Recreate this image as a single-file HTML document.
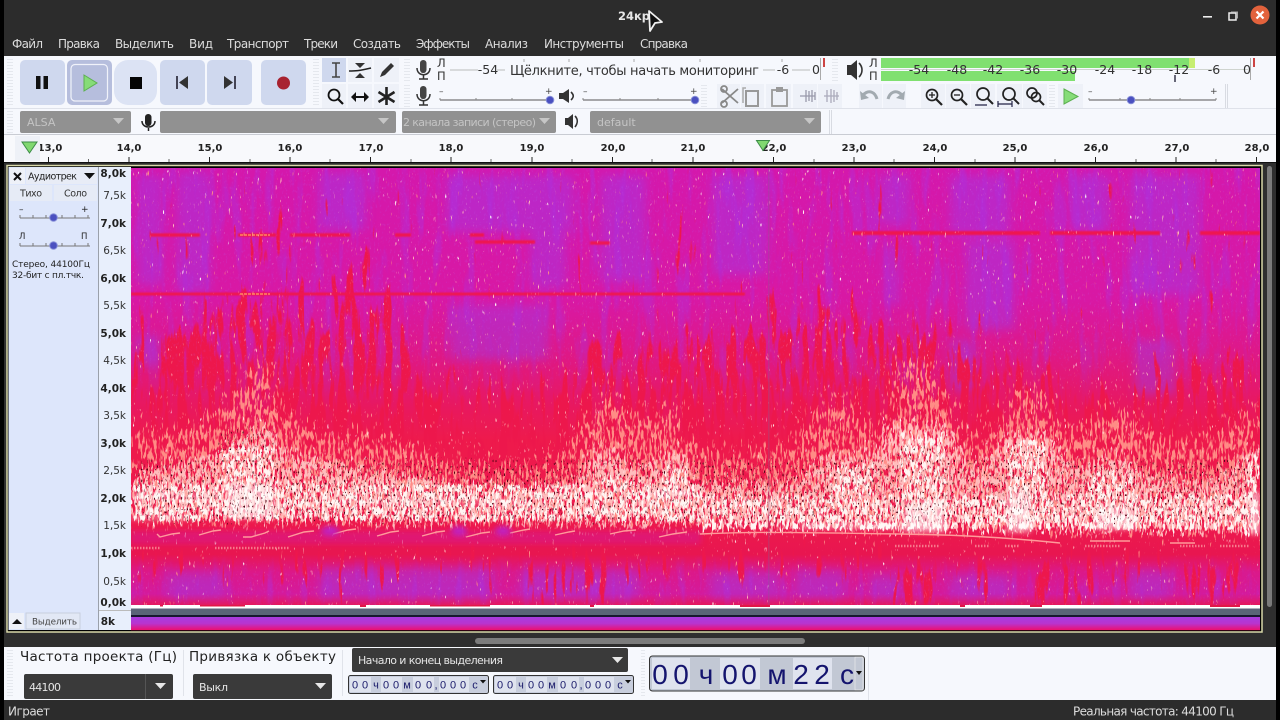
<!DOCTYPE html>
<html><head><meta charset="utf-8"><style>
html,body{margin:0;padding:0;background:#000;width:1280px;height:720px;overflow:hidden}
svg{display:block}
text{font-family:"DejaVu Sans","Liberation Sans",sans-serif}
.m{fill:#dcdcdc;font-size:12px}
.r{fill:#222;font-size:10px;font-weight:bold;text-anchor:middle}
.fb{fill:#222;font-size:10.5px;font-weight:bold;text-anchor:end}
.fn{fill:#333;font-size:10.5px;text-anchor:end}
.mt{fill:#333;font-size:12.5px;text-anchor:middle}
.dd{fill:#c4c4c4;font-size:11px}
.t{fill:#222;font-size:13.5px}
.w{fill:#e6e6e6;font-size:11px}
.tm{fill:#1a1a6a;font-size:11px;text-anchor:middle;font-family:"Liberation Sans",sans-serif}
.tb{fill:#14146e;font-size:28px;text-anchor:middle;font-family:"Liberation Sans",sans-serif}
</style></head><body>
<svg width="1280" height="720" viewBox="0 0 1280 720" xmlns="http://www.w3.org/2000/svg">
<defs>
<linearGradient id="base" x1="0" y1="168" x2="0" y2="607" gradientUnits="userSpaceOnUse">
<stop offset="0" stop-color="#d418ac"/><stop offset=".3" stop-color="#d818a4"/><stop offset=".42" stop-color="#de1888"/>
<stop offset=".54" stop-color="#e81860"/><stop offset=".62" stop-color="#ee1a4c"/><stop offset=".8" stop-color="#ee1a4c"/>
<stop offset=".88" stop-color="#e81650"/><stop offset=".92" stop-color="#dc1888"/><stop offset=".97" stop-color="#d41a9c"/><stop offset="1" stop-color="#e81850"/>
</linearGradient>
<linearGradient id="ch2" x1="0" y1="617" x2="0" y2="630" gradientUnits="userSpaceOnUse"><stop offset="0" stop-color="#a83ce0"/><stop offset=".5" stop-color="#b834d0"/><stop offset="1" stop-color="#ec1070"/></linearGradient>
<linearGradient id="fade" x1="0" y1="168" x2="0" y2="607" gradientUnits="userSpaceOnUse"><stop offset="0" stop-color="#fff"/><stop offset=".42" stop-color="#fff" stop-opacity=".8"/><stop offset=".55" stop-color="#fff" stop-opacity="0"/><stop offset=".88" stop-color="#fff" stop-opacity="0"/><stop offset=".95" stop-color="#fff"/><stop offset="1" stop-color="#fff" stop-opacity=".3"/></linearGradient>
<mask id="fm"><rect x="131" y="168" width="1129" height="439" fill="url(#fade)"/></mask>
<clipPath id="sp"><rect x="131" y="168" width="1129" height="438"/></clipPath>
<filter id="b8" x="0" y="0" width="1280" height="720" filterUnits="userSpaceOnUse"><feGaussianBlur stdDeviation="5"/></filter>
<filter id="b3" x="0" y="0" width="1280" height="720" filterUnits="userSpaceOnUse"><feGaussianBlur stdDeviation="3"/></filter>
<filter id="b1" x="0" y="0" width="1280" height="720" filterUnits="userSpaceOnUse"><feGaussianBlur stdDeviation=".7"/></filter>
<filter id="pur" x="131" y="168" width="1129" height="439" filterUnits="userSpaceOnUse" color-interpolation-filters="sRGB">
<feTurbulence type="fractalNoise" baseFrequency="0.09 0.012" numOctaves="3" seed="7"/>
<feColorMatrix type="matrix" values="0 0 0 0 .66  0 0 0 0 .2  0 0 0 0 .9  5 0 0 0 -2.6"/></filter>
<filter id="fine" x="131" y="168" width="1129" height="439" filterUnits="userSpaceOnUse" color-interpolation-filters="sRGB">
<feTurbulence type="fractalNoise" baseFrequency="0.5 0.3" numOctaves="2" seed="4"/>
<feColorMatrix type="matrix" values="0 0 0 0 .72  0 0 0 0 .4  0 0 0 0 .95  6 0 0 0 -3.5"/></filter>
<filter id="redn" x="131" y="168" width="1129" height="439" filterUnits="userSpaceOnUse" color-interpolation-filters="sRGB">
<feGaussianBlur in="SourceAlpha" stdDeviation="14" result="s"/>
<feTurbulence type="fractalNoise" baseFrequency="0.13 0.018" numOctaves="3" seed="21"/>
<feColorMatrix type="matrix" values="0 0 0 0 1  0 0 0 0 1  0 0 0 0 1  1 0 0 0 0" result="n"/>
<feComposite in="s" in2="n" operator="arithmetic" k1="0" k2="3" k3="10" k4="-7.5"/>
<feColorMatrix type="matrix" values="0 0 0 0 .93  0 0 0 0 .09  0 0 0 0 .3  0 0 0 1 0"/></filter>
<filter id="pale" x="131" y="168" width="1129" height="439" filterUnits="userSpaceOnUse" color-interpolation-filters="sRGB">
<feGaussianBlur in="SourceAlpha" stdDeviation="10" result="s"/>
<feTurbulence type="fractalNoise" baseFrequency="0.42 0.1" numOctaves="2" seed="3"/>
<feColorMatrix type="matrix" values="0 0 0 0 1  0 0 0 0 1  0 0 0 0 1  1 0 0 0 0" result="n"/>
<feComposite in="s" in2="n" operator="arithmetic" k1="0" k2="3" k3="10" k4="-7.7"/>
<feColorMatrix type="matrix" values="0 0 0 0 1  0 0 0 0 .55  0 0 0 0 .52  0 0 0 1 0"/></filter>
<filter id="pale2" x="131" y="168" width="1129" height="439" filterUnits="userSpaceOnUse" color-interpolation-filters="sRGB">
<feGaussianBlur in="SourceAlpha" stdDeviation="6" result="s"/>
<feTurbulence type="fractalNoise" baseFrequency="0.45 0.13" numOctaves="2" seed="9"/>
<feColorMatrix type="matrix" values="0 0 0 0 1  0 0 0 0 1  0 0 0 0 1  1 0 0 0 0" result="n"/>
<feComposite in="s" in2="n" operator="arithmetic" k1="0" k2="3" k3="10" k4="-7.4"/>
<feColorMatrix type="matrix" values="0 0 0 0 1  0 0 0 0 .74  0 0 0 0 .74  0 0 0 1 0"/></filter>
<filter id="whi" x="131" y="168" width="1129" height="439" filterUnits="userSpaceOnUse" color-interpolation-filters="sRGB">
<feGaussianBlur in="SourceAlpha" stdDeviation="3" result="s"/>
<feTurbulence type="fractalNoise" baseFrequency="0.4 0.13" numOctaves="2" seed="11"/>
<feColorMatrix type="matrix" values="0 0 0 0 1  0 0 0 0 1  0 0 0 0 1  1 0 0 0 0" result="n"/>
<feComposite in="s" in2="n" operator="arithmetic" k1="0" k2="3" k3="10" k4="-7.8"/>
<feColorMatrix type="matrix" values="0 0 0 0 1  0 0 0 0 .96  0 0 0 0 .95  0 0 0 1 0"/></filter>
<filter id="drk" x="131" y="168" width="1129" height="439" filterUnits="userSpaceOnUse" color-interpolation-filters="sRGB">
<feGaussianBlur in="SourceAlpha" stdDeviation="5" result="s"/>
<feTurbulence type="fractalNoise" baseFrequency="0.7 0.35" numOctaves="1" seed="17"/>
<feColorMatrix type="matrix" values="0 0 0 0 1  0 0 0 0 1  0 0 0 0 1  1 0 0 0 0" result="n"/>
<feComposite in="s" in2="n" operator="arithmetic" k1="0" k2="3" k3="12" k4="-10.7"/>
<feColorMatrix type="matrix" values="0 0 0 0 .32  0 0 0 0 .02  0 0 0 0 .08  0 0 0 1 0"/></filter>
</defs>

<!-- window -->
<rect width="1280" height="720" fill="#000"/>
<rect x="4" width="1272" height="720" fill="#2c2c2c"/>
<text x="618" y="20" fill="#e6e6e6" font-size="11.5" font-weight="bold">24кр</text>
<rect x="1203" y="16" width="9" height="1.6" fill="#eee"/>
<rect x="1229" y="13" width="7" height="7" fill="none" stroke="#eee" stroke-width="1.5"/><path d="M1231 12h6.500v6.500" fill="none" stroke="#aaa"/>
<circle cx="1260" cy="15" r="9.500" fill="#e2623c"/><path d="M1256.500 11.500l7 7m0-7l-7 7" stroke="#fff" stroke-width="2.200"/>
<path d="M649 11L662 22 655 23 650 31z" fill="#111" stroke="#f0f0f0" stroke-width="1.800" stroke-linejoin="round"/>
<text class="m" x="12" y="48" textLength="31">Файл</text>
<text class="m" x="58" y="48" textLength="42">Правка</text>
<text class="m" x="115" y="48" textLength="59">Выделить</text>
<text class="m" x="189" y="48" textLength="24">Вид</text>
<text class="m" x="227" y="48" textLength="62">Транспорт</text>
<text class="m" x="304" y="48" textLength="34">Треки</text>
<text class="m" x="353" y="48" textLength="48">Создать</text>
<text class="m" x="416" y="48" textLength="54">Эффекты</text>
<text class="m" x="485" y="48" textLength="43">Анализ</text>
<text class="m" x="544" y="48" textLength="80">Инструменты</text>
<text class="m" x="640" y="48" textLength="48">Справка</text>

<!-- toolbars -->
<rect x="4" y="56" width="1272" height="106" fill="#f6f8fd"/>
<path d="M4 108.500H1276" stroke="#dfe2ea"/><path d="M4 134.500H1276" stroke="#c9ccd3"/>
<g fill="none" stroke="#d4d7de" stroke-dasharray="1 2" stroke-width="1"><path d="M8 59v48M10 59v48M12 59v48M314 59v48M316 59v48M318 59v48M405 59v22M407 59v22M409 59v22M405 85v22M407 85v22M409 85v22M8 111v22M10 111v22M12 111v22M833 59v22M835 59v22M837 59v22M702 85v22M704 85v22M706 85v22M1050 85v22M1052 85v22M1054 85v22"/></g>
<g fill="#cfd8ee"><rect x="20" y="60" width="45" height="45" rx="5"/><rect x="160" y="60" width="45" height="45" rx="5"/><rect x="207" y="60" width="45" height="45" rx="5"/><rect x="261" y="60" width="45" height="45" rx="5"/></g>
<rect x="67" y="60" width="45" height="45" rx="5" fill="#b6bedd"/><rect x="71" y="64.500" width="36.500" height="36.500" rx="4" fill="none" stroke="#f0f2fa" stroke-width="1.200"/>
<rect x="114" y="60" width="43" height="45" rx="14" fill="#dce3f4"/>
<rect x="36" y="76" width="4.500" height="13" fill="#111"/><rect x="43.500" y="76" width="4.500" height="13" fill="#111"/>
<path d="M84 75l13 8-13 8z" fill="#86dc78" stroke="#5cb050"/>
<rect x="130" y="77" width="12" height="12" fill="#050505"/>
<rect x="176" y="76" width="2" height="13" fill="#445"/><path d="M188 76v13l-9-6.500z" fill="#333"/>
<path d="M224 76v13l9-6.500z" fill="#333"/><rect x="234" y="76" width="2" height="13" fill="#445"/>
<circle cx="283.500" cy="83" r="6.500" fill="#a82230"/>
<!-- tools -->
<rect x="322" y="58" width="24" height="24" fill="#cfd8ee"/>
<g fill="#eef1f8"><rect x="348" y="58" width="24" height="24"/><rect x="374" y="58" width="25" height="24"/><rect x="322" y="84" width="24" height="24"/><rect x="348" y="84" width="24" height="24"/><rect x="374" y="84" width="25" height="24"/></g>
<path d="M332 63h8M332 77h8M336 63v14" stroke="#444" stroke-width="1.600" fill="none"/>
<path d="M349 71c6 0 10 0 22-3" stroke="#222" stroke-width="1.600" fill="none"/><path d="M355 63h10l-5 5zM355 78h10l-5-5z" fill="#333"/>
<path d="M380 77l2-5 9-9 3 3-9 9z" fill="#333"/>
<circle cx="334" cy="95" r="5.500" fill="none" stroke="#111" stroke-width="1.800"/><path d="M338 99l5 5" stroke="#111" stroke-width="2.200"/>
<path d="M353 97h14" stroke="#111" stroke-width="2"/><path d="M356 92l-5 5 5 5zM364 92l5 5-5 5z" fill="#111"/>
<path d="M386.500 87v18M378.500 92l16 10M394.500 92l-16 10" stroke="#222" stroke-width="2.600"/>
<!-- mics -->
<rect x="420" y="60" width="6.500" height="13" rx="3.200" fill="#444"/><path d="M417 68c0 9 13 9 13 0M423.500 75v4M419 79h9" stroke="#333" stroke-width="1.500" fill="none"/>
<rect x="420" y="86" width="6.500" height="13" rx="3.200" fill="#444"/><path d="M417 94c0 9 13 9 13 0M423.500 101v4M419 105h9" stroke="#333" stroke-width="1.500" fill="none"/>
<rect x="145" y="114" width="6.500" height="12" rx="3.200" fill="#222"/><path d="M142 121c0 8 13 8 13 0M148.500 128v3" stroke="#222" stroke-width="1.500" fill="none"/>
<!-- rec meter -->
<text x="437" y="67" fill="#333" font-size="11.500">Л</text><text x="437" y="80" fill="#333" font-size="11.500">П</text>
<path d="M450 70H478M497 70H505M763 70H775M792 70H810" stroke="#bbb"/>
<path d="M524 59v3M569 59v3M634 59v3M700 59v3M782 59v3" stroke="#aaa"/>
<text class="mt" x="488" y="74">-54</text><text class="mt" x="783" y="74">-6</text><text class="mt" x="816" y="74">0</text>
<text x="510" y="75" fill="#333" font-size="13" textLength="249">Щёлкните, чтобы начать мониторинг</text>
<rect x="820" y="58" width="1" height="22" fill="#aaa"/><rect x="823" y="58" width="2" height="9" fill="#c44"/>
<!-- sliders -->
<g stroke="#555" fill="none"><path d="M440 100H552M583 100H696M1089 100H1216"/><path d="M440 98v2M476 98v2M512 98v2M583 98v2M620 98v2M658 98v2M1089 98v2M1120 98v2M1150 98v2M1180 98v2M1216 98v2" stroke="#888"/></g>
<g fill="#444" font-size="9"><text x="439" y="94">–</text><text x="545" y="94">+</text><text x="583" y="94">–</text><text x="690" y="94">+</text><text x="1088" y="94">–</text><text x="1210" y="94">+</text></g>
<g fill="#4a50c0" stroke="#8890d8"><circle cx="550" cy="100" r="3.800"/><circle cx="695" cy="100" r="3.800"/><circle cx="1131" cy="100" r="3.800"/></g>
<!-- speakers -->
<g fill="#333"><path d="M559 93h4l6-4v14l-6-4h-4z"/><path d="M847 65h4l6-5v20l-6-5h-4z"/><path d="M565 118h3l5-4v15l-5-4h-3z"/></g>
<path d="M571 92c3 3 3 5 0 8M859 63c4 4 4 10 0 14M575 116c3 3 3 7 0 11" stroke="#333" stroke-width="1.600" fill="none"/>
<!-- edit icons -->
<g fill="#eef1f8"><rect x="717" y="84" width="23" height="24"/><rect x="741" y="84" width="23" height="24"/><rect x="766" y="84" width="25" height="24"/><rect x="793" y="84" width="24" height="24"/><rect x="818" y="84" width="24" height="24"/><rect x="859" y="84" width="23" height="24"/><rect x="883" y="84" width="23" height="24"/><rect x="921" y="84" width="24" height="24"/><rect x="946" y="84" width="24" height="24"/><rect x="971" y="84" width="24" height="24"/><rect x="997" y="84" width="25" height="24"/><rect x="1023" y="84" width="24" height="24"/><rect x="1058" y="84" width="25" height="24"/></g>
<path d="M722 89l16 14M738 89l-16 14" stroke="#888" stroke-width="1.800"/><circle cx="724" cy="104" r="3" fill="none" stroke="#888" stroke-width="1.800"/><circle cx="724" cy="89" r="3" fill="none" stroke="#888" stroke-width="1.800"/>
<rect x="746" y="91" width="12" height="15" fill="none" stroke="#999" stroke-width="2"/><path d="M746 88h-3v15" fill="none" stroke="#aaa" stroke-width="1.500"/>
<rect x="772" y="90" width="15" height="16" fill="none" stroke="#999" stroke-width="1.800"/><rect x="776" y="87" width="7" height="5" fill="#999"/>
<path d="M800 96h15M806 90v12M809 91v10M812 90v12M815 92v8" stroke="#99a" stroke-width="1.300"/><path d="M824 96h15M827 90v12M831 89v14M834 90v12M837 92v8" stroke="#aab" stroke-width="1.300"/>
<path d="M863 95c6-6 12-3 14 4" stroke="#a2aab0" stroke-width="3" fill="none"/><path d="M860 91l1 9 8-2z" fill="#a2aab0"/>
<path d="M902 95c-6-6-12-3-14 4" stroke="#a2aab0" stroke-width="3" fill="none"/><path d="M905 91l-1 9-8-2z" fill="#a2aab0"/>
<g fill="none" stroke="#222" stroke-width="1.700"><circle cx="932" cy="95" r="5.500"/><path d="M936 99l6 6" stroke-width="2.200"/><path d="M929 95h6M932 92v6" stroke-width="1.300"/>
<circle cx="957" cy="95" r="5.500"/><path d="M961 99l6 6" stroke-width="2.200"/><path d="M954 95h6" stroke-width="1.300"/>
<circle cx="983" cy="94" r="6"/><path d="M987 98l6 6" stroke-width="2"/>
<circle cx="1009" cy="94" r="6"/><path d="M1013 98l6 6" stroke-width="2"/>
<circle cx="1032" cy="93" r="5"/><circle cx="1036" cy="97" r="4.500"/><path d="M1039 100l5 5" stroke-width="2"/></g>
<path d="M975 105h12M998 101v6M998 104h14M1012 101v6" stroke="#224" stroke-width="1.200"/>
<path d="M1064 89l14 7.500-14 7.500z" fill="#86dc78" stroke="#5cb050"/>
<!-- play meter -->
<text x="869" y="67" fill="#333" font-size="11.500">Л</text><text x="869" y="80" fill="#333" font-size="11.500">П</text>
<rect x="881" y="58" width="308" height="10" fill="#80e070"/><rect x="1189" y="58" width="6" height="10" fill="#c6ee70"/>
<rect x="881" y="71" width="194" height="10" fill="#80e070"/>
<path d="M881 69.500H1248" stroke="#cfd4cf"/><rect x="1174" y="75" width="2" height="7" fill="#667"/>
<rect x="1253" y="58" width="2" height="9" fill="#c44"/><rect x="1250" y="58" width="1" height="22" fill="#aaa"/>
<text class="mt" x="919" y="74">-54</text><text class="mt" x="957" y="74">-48</text><text class="mt" x="993" y="74">-42</text><text class="mt" x="1030" y="74">-36</text><text class="mt" x="1067" y="74">-30</text><text class="mt" x="1105" y="74">-24</text><text class="mt" x="1142" y="74">-18</text><text class="mt" x="1179" y="74">-12</text><text class="mt" x="1214" y="74">-6</text><text class="mt" x="1247" y="74">0</text>
<!-- device row -->
<g fill="#919191"><rect x="20" y="111" width="111" height="22" rx="2"/><rect x="160" y="111" width="236" height="22" rx="2"/><rect x="402" y="111" width="154" height="22" rx="2"/><rect x="590" y="111" width="231" height="22" rx="2"/></g>
<text class="dd" x="27" y="126">ALSA</text><text class="dd" x="403" y="126" textLength="133">2 канала записи (стерео)</text><text class="dd" x="597" y="126">default</text>
<g fill="#c6c6c6"><path d="M113 118h11l-5.500 6zM378 118h11l-5.500 6zM539 118h11l-5.500 6zM804 118h11l-5.500 6z"/></g>
<path d="M829.500 110v24M831.500 110v24" stroke="#d8dbe2"/>
<path d="M1225.500 84v24M1227.500 84v24" stroke="#d8dbe2"/>
<!-- ruler -->
<rect x="4" y="135" width="1272" height="27" fill="#f8f9fc"/>
<text class="r" x="50" y="151">13,0</text><text class="r" x="129" y="151">14,0</text><text class="r" x="210" y="151">15,0</text><text class="r" x="290" y="151">16,0</text><text class="r" x="371" y="151">17,0</text><text class="r" x="451" y="151">18,0</text><text class="r" x="532" y="151">19,0</text><text class="r" x="613" y="151">20,0</text><text class="r" x="693" y="151">21,0</text><text class="r" x="774" y="151">22,0</text><text class="r" x="854" y="151">23,0</text><text class="r" x="935" y="151">24,0</text><text class="r" x="1015" y="151">25,0</text><text class="r" x="1096" y="151">26,0</text><text class="r" x="1177" y="151">27,0</text><text class="r" x="1257" y="151">28,0</text>
<rect x="15" y="136" width="25" height="25" fill="#eef1f7"/>
<path d="M22 142h15l-7.500 11z" fill="#80d870" stroke="#3c8c48"/>
<path d="M756.500 140.500h13l-6.500 10z" fill="#80d870" stroke="#3c8c48"/>
<path d="M48.500 157v5M129 157v5M209.500 157v5M290 157v5M370.500 157v5M451 157v5M532 157v5M612.500 157v5M693 157v5M773.500 157v5M854 157v5M934.500 157v5M1015 157v5M1095.500 157v5M1176 157v5M1256.500 157v5" stroke="#222"/>
<path d="M88.500 159v3M169 159v3M250 159v3M330 159v3M411 159v3M491 159v3M572 159v3M652 159v3M733 159v3M814 159v3M894 159v3M975 159v3M1055 159v3M1136 159v3M1216 159v3" stroke="#666"/>
<rect x="4" y="162" width="1272" height="1.500" fill="#111"/>

<!-- track surround -->
<rect x="4" y="163" width="1272" height="484" fill="#2e2e2e"/>
<rect x="7" y="165.500" width="1255" height="466.500" fill="#000" stroke="#d8d8a8" stroke-width="1.500"/>
<rect x="8.500" y="167" width="89.500" height="463" fill="#dde6fb"/>
<rect x="99" y="167" width="32" height="463" fill="#e8effc"/>
<!-- track panel -->
<rect x="10" y="168" width="15" height="16" fill="#eef1f8"/><path d="M14 173l7 7m0-7l-7 7" stroke="#111" stroke-width="2"/>
<rect x="26" y="168" width="71" height="16" fill="#e8ecf6"/>
<text x="28" y="179.500" fill="#222" font-size="9.500" textLength="49">Аудиотрек</text>
<path d="M84 173h11l-5.500 6z" fill="#111"/>
<rect x="10" y="185" width="42" height="16" fill="#e6ebf6"/><rect x="54" y="185" width="43" height="16" fill="#e6ebf6"/>
<text x="20" y="196.500" fill="#333" font-size="9.500" textLength="22">Тихо</text><text x="64" y="196.500" fill="#333" font-size="9.500" textLength="23">Соло</text>
<text x="19" y="212" fill="#222" font-size="9">–</text><text x="81" y="212" fill="#222" font-size="9">+</text>
<text x="19" y="239" fill="#222" font-size="8.500">Л</text><text x="81" y="239" fill="#222" font-size="8.500">П</text>
<path d="M20 218H90M20 246H90M20 215v3M33 215v3M46 215v3M62 215v3M75 215v3M88 215v3M20 243v3M33 243v3M46 243v3M62 243v3M75 243v3M88 243v3" stroke="#777" fill="none"/>
<g fill="#4a50c0" stroke="#8890d8"><circle cx="53.500" cy="217.500" r="3.800"/><circle cx="53.500" cy="245.500" r="3.800"/></g>
<text x="12" y="267" fill="#222" font-size="9" textLength="78">Стерео, 44100Гц</text>
<text x="12" y="278" fill="#222" font-size="9" textLength="72">32-бит с пл.тчк.</text>
<rect x="9" y="613" width="15" height="16" fill="#eef1f8"/><path d="M12 624h10l-5-5z" fill="#111"/>
<rect x="26" y="613" width="54" height="16" fill="#e2e8f5" stroke="#c8cfdd"/><text x="32" y="624.500" fill="#444" font-size="8.800" textLength="45">Выделить</text>
<!-- vertical ruler -->
<rect x="98" y="167" width="1" height="463" fill="#9aa0aa"/>
<text class="fb" x="126" y="177">8,0k</text><text class="fn" x="126" y="199">7,5k</text><text class="fb" x="126" y="227">7,0k</text><text class="fn" x="126" y="254">6,5k</text><text class="fb" x="126" y="282">6,0k</text><text class="fn" x="126" y="309">5,5k</text><text class="fb" x="126" y="337">5,0k</text><text class="fn" x="126" y="364">4,5k</text><text class="fb" x="126" y="392">4,0k</text><text class="fn" x="126" y="419">3,5k</text><text class="fb" x="126" y="447">3,0k</text><text class="fn" x="126" y="474">2,5k</text><text class="fb" x="126" y="502">2,0k</text><text class="fn" x="126" y="529">1,5k</text><text class="fb" x="126" y="557">1,0k</text><text class="fn" x="126" y="585">0,5k</text><text class="fb" x="126" y="606">0,0k</text>
<text class="fb" x="115" y="625">8k</text>
<rect x="99" y="610" width="32" height="1" fill="#bbb"/>

<!-- spectrogram -->
<g clip-path="url(#sp)">
<rect x="131" y="168" width="1129" height="439" fill="url(#base)"/>
<!-- purple patches -->
<g fill="#9a3cf0" filter="url(#b8)" opacity=".4">
<rect x="137" y="175" width="26" height="110"/><rect x="177" y="172" width="33" height="120"/>
<rect x="319" y="172" width="47" height="58"/><rect x="446" y="175" width="128" height="57"/>
<rect x="530" y="232" width="36" height="56"/><rect x="600" y="175" width="46" height="107"/>
<rect x="450" y="305" width="98" height="55"/><rect x="712" y="175" width="55" height="100"/>
<rect x="880" y="175" width="30" height="50"/><rect x="950" y="175" width="60" height="60"/><rect x="1070" y="175" width="40" height="55"/><rect x="1130" y="175" width="70" height="120"/>
<rect x="965" y="240" width="50" height="90"/><rect x="1135" y="340" width="40" height="55"/><rect x="950" y="340" width="25" height="50"/><rect x="885" y="245" width="14" height="60"/>
<rect x="166" y="572" width="60" height="26"/><rect x="319" y="568" width="175" height="30"/><rect x="520" y="570" width="120" height="28"/><rect x="710" y="572" width="70" height="26"/><rect x="795" y="570" width="50" height="28"/><rect x="870" y="575" width="30" height="23"/><rect x="950" y="575" width="60" height="23"/><rect x="1130" y="570" width="40" height="28"/>
<rect x="135" y="335" width="25" height="30"/>
</g>
<rect x="131" y="168" width="1129" height="439" filter="url(#pur)" mask="url(#fm)" opacity=".4"/>
<!-- red grainy mass -->
<g filter="url(#redn)">
<path d="M131 350L170 320 260 290 300 290 340 330 380 310 420 350 450 385 560 385 590 330 640 340 700 330 800 310 900 320 950 330 1000 360 1130 395 1260 330V480H131z"/>
<rect x="340" y="240" width="40" height="110"/><rect x="255" y="180" width="20" height="120"/><rect x="670" y="190" width="16" height="120"/>
<rect x="131" y="555" width="1129" height="20"/>
<rect x="540" y="560" width="40" height="42"/><rect x="880" y="560" width="60" height="42"/><rect x="1040" y="560" width="60" height="42"/><rect x="1190" y="560" width="60" height="42"/>
</g>
<rect x="131" y="168" width="1129" height="439" filter="url(#fine)" mask="url(#fm)" opacity=".16"/>
<!-- horizontal hum lines -->
<g stroke="#ee1850" stroke-width="3.500" fill="none" filter="url(#b1)">
<path d="M150 235h50M238 235h38M290 235h60M395 235h16M470 235h14M475 242h60M590 243h20"/>
<path d="M131 294H745" stroke-width="3"/>
<path d="M852 233H1040M1050 233H1160M1200 233H1260" stroke-width="4"/>
</g>
<path d="M240 294h30M240 235h30" stroke="#ff8860" stroke-width="1.500" stroke-dasharray="3 1"/>
<!-- sparse pale speckle -->
<path filter="url(#pale)" d="M131 400L150 430 200 420 230 395 265 345 280 400 320 430 380 430 420 445 450 455 500 460 560 455 590 405 610 385 640 420 680 395 690 440 740 450 790 440 820 400 850 395 880 440 895 360 915 350 948 385 965 440 1000 420 1015 380 1045 385 1060 430 1090 420 1120 395 1140 420 1170 440 1210 430 1260 400V535L1000 532 700 526 131 522z"/>
<!-- denser pale -->
<path filter="url(#pale2)" d="M131 470L220 450 265 420 290 450 400 470 500 490 570 480 600 440 640 465 680 440 700 480 790 480 830 450 870 450 890 420 950 420 975 470 1005 430 1050 430 1075 465 1120 450 1150 470 1210 480 1260 440V534L700 528 131 522z"/>
<!-- white core -->
<g filter="url(#whi)">
<path d="M131 482H700V522H131z"/><path d="M700 494H1260V532H700z"/>
<rect x="220" y="445" width="55" height="76"/><rect x="600" y="475" width="30" height="48"/><rect x="662" y="465" width="26" height="58"/>
<rect x="830" y="465" width="45" height="66"/><rect x="898" y="432" width="50" height="100"/><rect x="1006" y="440" width="42" height="92"/><rect x="1088" y="472" width="48" height="60"/><rect x="1244" y="450" width="16" height="88"/>
</g>
<!-- solid white cores -->
<g fill="#fff" filter="url(#b3)" opacity=".6">
<rect x="228" y="484" width="46" height="34"/><rect x="131" y="494" width="90" height="4"/><rect x="905" y="502" width="40" height="30"/><rect x="1007" y="492" width="24" height="40"/><rect x="1095" y="507" width="40" height="22"/><rect x="1250" y="492" width="10" height="42"/><rect x="650" y="490" width="40" height="7"/><rect x="340" y="500" width="180" height="3"/>
<rect x="131" y="516" width="60" height="3"/><rect x="800" y="524" width="120" height="4"/>
</g>
<!-- dark specks -->
<g filter="url(#drk)">
<rect x="131" y="455" width="1129" height="72"/><rect x="215" y="425" width="62" height="40"/><rect x="895" y="440" width="55" height="30"/><rect x="1003" y="440" width="50" height="30"/>
</g>
<!-- low band -->
<rect x="131" y="531" width="570" height="13" fill="#d41898" opacity=".5" filter="url(#b3)"/>
<g stroke="#ff9a9a" stroke-width="1.400" fill="none">
<path d="M157 534l3 3 12-3 8-1M199 535l14-4 8-1M243 537l8 0 14-4 4-2M288 537l16-5 10-1M333 534l15-4 8-1M377 536l14-4 8-1M422 536l15-4 8-1M466 537l16-4 8-1M510 533l14-3 6-1M555 535l14-3 6-1M610 534l14-3 12-1M659 537l14-3 14-2"/>
<path d="M700 534c60-3 120-1 200 0 80 1 130 6 160 9M1090 541h40M1170 543h25"/>
</g>
<g stroke="#ffaaaa" stroke-width="2.500" stroke-dasharray="1.500 1.500" fill="none" opacity=".65">
<path d="M131 548h30M215 548h75M895 546h45M975 546h15M1005 546h15M1085 546h35M1180 546h25M1220 546h30"/>
</g>
<g fill="#c020c0" filter="url(#b3)"><ellipse cx="330" cy="531" rx="9" ry="5"/><ellipse cx="459" cy="531" rx="8" ry="5"/><ellipse cx="503" cy="531" rx="8" ry="5"/></g>
<rect x="768" y="168" width="1.500" height="438" fill="#806090" opacity=".3"/>
</g>
<!-- bottom of channel 1 and channel 2 -->
<rect x="131" y="605" width="1129" height="3.500" fill="#fff"/>
<g fill="#e01848"><rect x="160" y="605" width="3" height="1.500"/><rect x="200" y="605" width="45" height="1.500"/><rect x="360" y="605" width="6" height="2"/><rect x="430" y="605" width="60" height="1.500"/><rect x="590" y="605" width="4" height="2"/><rect x="740" y="605" width="30" height="2"/><rect x="960" y="605" width="5" height="2"/><rect x="1030" y="605" width="12" height="2"/><rect x="1210" y="605" width="30" height="2"/></g>
<rect x="131" y="608.500" width="1129" height="6.500" fill="#5a6478"/>
<rect x="131" y="615" width="1129" height="2" fill="#181830"/>
<rect x="131" y="617" width="1129" height="13" fill="url(#ch2)"/>
<rect x="131" y="630" width="1129" height="1" fill="#300010"/>
<!-- scrollbars -->
<rect x="1267" y="166" width="5" height="441" rx="2.500" fill="#7a7a7a"/>
<rect x="475" y="638" width="330" height="6" rx="3" fill="#7c7c7c"/>
<!-- bottom panel -->
<rect x="4" y="647" width="1272" height="53" fill="#f6f8fd"/>
<path d="M8 650v46M10 650v46M12 650v46M642 650v46M644 650v46" stroke="#d4d7de" stroke-dasharray="1 2"/>
<path d="M183.500 650v46M342.500 650v46M868.500 647v53" stroke="#e0e3ea"/>
<text class="t" x="20" y="661" textLength="157">Частота проекта (Гц)</text>
<text class="t" x="189" y="661" textLength="147">Привязка к объекту</text>
<rect x="24" y="674" width="149" height="25" rx="2" fill="#3a3a3a"/><rect x="145" y="674" width="1" height="25" fill="#555"/>
<text class="w" x="29" y="691" textLength="32">44100</text><path d="M155 683h11l-5.500 6z" fill="#e8e8e8"/>
<rect x="193" y="674" width="139" height="25" rx="2" fill="#3a3a3a"/>
<text class="w" x="199" y="691" textLength="29">Выкл</text><path d="M315 683h11l-5.500 6z" fill="#e8e8e8"/>
<rect x="352" y="648" width="276" height="24" rx="2" fill="#3a3a3a"/>
<text class="w" x="358" y="664" textLength="145">Начало и конец выделения</text><path d="M612 657h11l-5.500 6z" fill="#e8e8e8"/>
<!-- time small -->
<rect x="348.500" y="675.500" width="140" height="18" rx="2" fill="#c8cedd" stroke="#333"/>
<rect x="493.500" y="675.500" width="140" height="18" rx="2" fill="#c8cedd" stroke="#333"/>
<g fill="#dfe3ee"><rect x="350" y="677" width="21" height="15"/><rect x="381" y="677" width="21" height="15"/><rect x="413" y="677" width="21" height="15"/><rect x="439" y="677" width="30" height="15"/><rect x="495" y="677" width="21" height="15"/><rect x="526" y="677" width="21" height="15"/><rect x="558" y="677" width="21" height="15"/><rect x="584" y="677" width="30" height="15"/></g>
<text class="tm" x="355 365 376 386 396 407 418 429 436 443 453 463 475" y="688.500">00ч00м00,000с</text>
<text class="tm" x="500 510 521 531 541 552 563 574 581 588 598 608 620" y="688.500">00ч00м00,000с</text>
<path d="M480 680h6l-3 3.500zM625 680h6l-3 3.500z" fill="#111"/>
<!-- time big -->
<rect x="649.500" y="656" width="215" height="35" rx="3" fill="#c2c8d4" stroke="#333"/>
<g fill="#dfe3ee"><rect x="652" y="658" width="38" height="31"/><rect x="720" y="658" width="40" height="31"/><rect x="793" y="658" width="39" height="31"/></g>
<rect x="855" y="657" width="8" height="33" fill="#c2c8d4" stroke="#f0f0f0" stroke-width=".6"/><path d="M856 671h6l-3 4z" fill="#111"/>
<text class="tb" x="660" y="684">0</text><text class="tb" x="681" y="684">0</text><text class="tb" x="706" y="684" font-size="25">ч</text><text class="tb" x="730" y="684">0</text><text class="tb" x="749" y="684">0</text><text class="tb" x="777" y="684" font-size="25">м</text><text class="tb" x="801" y="684">2</text><text class="tb" x="822" y="684">2</text><text class="tb" x="847" y="684" font-size="25">с</text>
<!-- status -->
<rect x="4" y="700" width="1272" height="20" fill="#2c2c2c"/>
<text x="8" y="715.500" fill="#dcdcdc" font-size="12" textLength="42">Играет</text>
<text x="1073" y="715.500" fill="#dcdcdc" font-size="12" textLength="161">Реальная частота: 44100 Гц</text>
</svg>
</body></html>
